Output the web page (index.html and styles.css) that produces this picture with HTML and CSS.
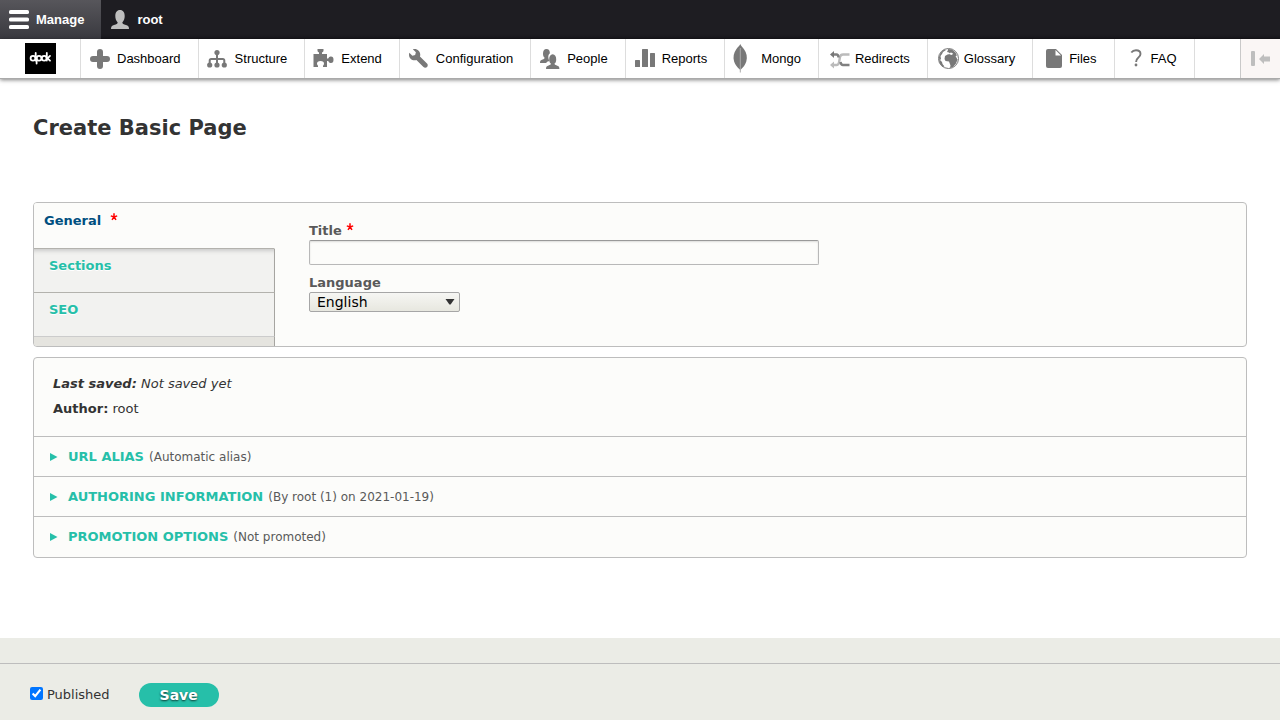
FILE: index.html
```html
<!DOCTYPE html>
<html lang="en">
<head>
<meta charset="utf-8">
<title>Create Basic Page</title>
<meta name="viewport" content="width=device-width, initial-scale=1">
<link rel="stylesheet" href="styles.css">
</head>
<body>
<nav class="bar" aria-label="Administration toolbar">
  <a class="bar-tab is-active" href="#">
    <svg class="bar-icon" viewBox="0 0 20 20" fill="#fff"><rect y="0" width="20" height="4" rx="1.6"/><rect y="7.500" width="20" height="4" rx="1.6"/><rect y="15" width="20" height="4" rx="1.6"/></svg>
    Manage
  </a>
  <a class="bar-tab" href="#">
    <svg class="bar-icon" viewBox="0 0 20 20" fill="#bebebe"><path d="M1 19c0-2.600 1-3.400 3-4 2.500-.7 3.700-1.300 3.700-2.600C6 10.800 5.300 8.500 5.300 6c0-3.500 1.600-6 4.700-6s4.700 2.500 4.700 6c0 2.500-.7 4.800-2.400 6.400 0 1.300 1.200 1.900 3.700 2.600 2 .6 3 1.400 3 4z"/></svg>
    root
  </a>
</nav>
<nav class="tray" aria-label="Administration menu">
  <a class="brand" href="#" aria-label="dpdk">
    <svg class="brand-logo" viewBox="0 0 31 31" fill="none" stroke="#fff" stroke-width="1.800" stroke-linecap="round"><rect width="31" height="31" fill="#000" stroke="none"/><circle cx="8" cy="15.300" r="2.400"/><line x1="10.700" y1="10" x2="10.700" y2="17.500"/><circle cx="14" cy="15.300" r="2.400"/><line x1="11.600" y1="15" x2="11.600" y2="20.500"/><circle cx="19.200" cy="15.300" r="2.400"/><line x1="21.800" y1="10" x2="21.800" y2="17.500"/><line x1="22.500" y1="15.300" x2="25" y2="12.900"/><line x1="22.500" y1="15.300" x2="25" y2="17.700"/></svg>
  </a>
  <ul class="menu">
    <li><a href="#"><svg class="menu-icon" viewBox="0 0 36 39"><path d="M19 13v14M12 20h14" fill="none" stroke="#787878" stroke-width="6" stroke-linecap="round"/></svg>Dashboard</a></li>
    <li><a href="#"><svg class="menu-icon" viewBox="0 0 36 39"><g fill="#787878"><circle cx="18" cy="13.500" r="2.600"/><circle cx="10.700" cy="26" r="2.600"/><circle cx="18" cy="26" r="2.600"/><circle cx="25.300" cy="26" r="2.600"/></g><path d="M18 14v12M10.700 26v-4.500q0-1.500 1.500-1.500h11.600q1.500 0 1.500 1.500v4.500" fill="none" stroke="#787878" stroke-width="2"/></svg>Structure</a></li>
    <li><a href="#"><svg class="menu-icon" viewBox="0 0 36 39" fill="#787878"><path d="M8.500 15h5.500v-1.500q-1.500-.5-1.500-1.700V10h6v1.800q0 1.200-1.500 1.700V15h5v4.500h1.200q.8-2 2.300-2h.5q2.500 0 2.500 3.200t-2.500 3.200h-.5q-1.500 0-2.300-2H22V28h-4v-1.200q1-1 1-2.100 0-2.700-3.500-2.700T12 24.700q0 1.100 1 2.100V28H8.500z"/></svg>Extend</a></li>
    <li><a href="#"><svg class="menu-icon" viewBox="0 0 36 39" fill="#787878"><path transform="translate(9 10) scale(1.250)" d="M14.416 11.586l-.01-.009-5.656-5.656c.15-.449.252-.921.252-1.421 0-2.485-2.016-4.500-4.502-4.500-.505 0-.981.102-1.434.255l2.431 2.431-.588 2.196-2.196.588-2.445-2.445c-.162.464-.268.956-.268 1.475 0 2.486 2.014 4.500 4.500 4.500.5 0 .972-.102 1.421-.251l5.667 5.665c.781.781 2.047.781 2.828 0s.781-2.047 0-2.828z"/></svg>Configuration</a></li>
    <li><a href="#"><svg class="menu-icon" viewBox="0 0 36 39" fill="#787878"><path d="M9 24c0-2.200.8-3 2.600-3.500 1.300-.4 2-.8 2-1.700-1-.9-1.600-2.300-1.600-4.100 0-2.900 1.200-4.700 3.400-4.700 2.400 0 3.500 1.500 3.500 4.300-1.500 1.300-2 3-1.300 5.600.3.900.6 1.500 1 1.900-1.300.6-2.600.8-3.400 2.200z"/><path d="M15 30c0-2.200.8-3 2.600-3.500 1.500-.4 2.300-.9 2.300-1.900-1.200-.9-1.700-2.400-1.700-4.200 0-3 1.300-5.100 3.500-5.100s3.500 2.100 3.500 5.100c0 1.800-.5 3.300-1.700 4.200 0 1 .8 1.500 2.300 1.900 1.800.5 2.600 1.300 2.600 3.500z"/></svg>People</a></li>
    <li><a href="#"><svg class="menu-icon" viewBox="0 0 36 39" fill="#787878"><rect x="9" y="21" width="5" height="7" rx=".5"/><rect x="16" y="10" width="6" height="18" rx=".5"/><rect x="24" y="14" width="5" height="14" rx=".5"/></svg>Reports</a></li>
    <li><a href="#"><svg class="menu-icon" viewBox="0 0 36 39"><path d="M15.300 5c.5 1.800 2.200 3.200 3.700 5.200 2.600 3.500 3.600 8 2.300 12.200-1 3.300-3 5.900-5.500 8h-1c-2.700-2.300-4.700-4.700-5.700-7.900-1.300-4.300-.3-8.900 2.200-12.300C12.500 8.200 14.800 7 15.300 5z" fill="#787878"/><path d="M15.300 9v24.500" stroke="#aaa" stroke-width="1" fill="none"/></svg>Mongo</a></li>
    <li><a href="#"><svg class="menu-icon" viewBox="0 0 36 39" fill="none" stroke-width="2.400"><path d="M14 26h3.500q2 0 2.500-2.500l1-5.500q.5-2.500 3-2.500h6.500" stroke="#bbb"/><path d="M11 26l4-3.500v7z" fill="#bbb"/><path d="M14 15.500h3.500q1.800 0 2 3M21.500 23q.5 3 2.500 3h6.500" stroke="#808080"/><path d="M11 15.500l4-3.500v7z" fill="#787878"/></svg>Redirects</a></li>
    <li><a href="#"><svg class="menu-icon" viewBox="0 0 36 39"><circle cx="20.500" cy="19.500" r="10" fill="#fff" stroke="#787878" stroke-width="1"/><g fill="#787878"><path d="M20 10l4 .5 3.500 3 1.500 3-1.500.5 2 3.500-1.500 4-3 3.500-3 1 .5-2.500-1.500-4-3.500-.5-1-2 .5-3 2.500-1.500 2.500-.5-1-1.500-2-.5 1-2z"/><path d="M11 18l1.500-4 3.500-3.500 2 .5-3 2-1 2-1.500 2 .5 3-1 1 2 2 .5 2 2 2.500-2 .5-3-4z"/></g><path d="M21 14.500l2-1 2 1-1 1.500-2-.5z" fill="#fff"/></svg>Glossary</a></li>
    <li><a href="#"><svg class="menu-icon" viewBox="0 0 36 39"><path d="M15 10h8l6 6v11q0 2-2 2H15q-2 0-2-2V12q0-2 2-2z" fill="#787878"/><path d="M22.500 11l5.500 5.500h-5.500z" fill="#fff"/></svg>Files</a></li>
    <li><a href="#"><svg class="menu-icon" viewBox="0 0 36 39"><path d="M16.300 13.500Q18 11.300 21 11.300q4.500 0 4.500 3.700 0 2-2.500 4-1.900 1.500-1.900 4" fill="none" stroke="#787878" stroke-width="1.900"/><circle cx="21" cy="26" r="1.400" fill="#787878"/></svg>FAQ</a></li>
  </ul>
  <button class="orient" type="button" aria-label="Vertical orientation"><svg class="orient-icon" viewBox="0 0 20 16" fill="#bebebe"><rect width="4" height="15" rx="1"/><path d="M8 8l5-5v2.500h6v5h-6V13z"/></svg></button>
</nav>
<form class="page">
  <main class="content">
    <h1 class="title">Create Basic Page</h1>
    <section class="panel tabs">
      <ul class="tab-list">
        <li class="tab is-selected"><a href="#">General <svg class="required" viewBox="0 0 8 8" aria-label="required"><path d="M4 .3V4L.8 2.900M4 4l3.200-1.100M4 4L2 6.900M4 4l2 2.900" fill="none" stroke="#f00" stroke-width="1.500"/></svg></a></li>
        <li class="tab"><a href="#">Sections</a></li>
        <li class="tab"><a href="#">SEO</a></li>
      </ul>
      <div class="fields">
        <div class="field">
          <label for="title">Title <svg class="required" viewBox="0 0 8 8" aria-hidden="true"><path d="M4 .3V4L.8 2.900M4 4l3.200-1.100M4 4L2 6.900M4 4l2 2.900" fill="none" stroke="#f00" stroke-width="1.500"/></svg></label>
          <input class="text-input" id="title" type="text" required>
        </div>
        <div class="field">
          <label for="language">Language</label>
          <span class="select-wrap">
            <select class="select" id="language"><option>English</option></select>
            <svg class="select-arrow" viewBox="0 0 10 6" aria-hidden="true"><path d="M.5 0h9L5.600 5.500H4.400z" fill="#333"/></svg>
          </span>
        </div>
      </div>
    </section>
    <section class="panel">
      <div class="meta">
        <p><em><strong>Last saved:</strong> Not saved yet</em></p>
        <p><strong>Author:</strong> root</p>
      </div>
      <details class="option"><summary><svg class="marker" viewBox="0 0 8 8"><path d="M0 0l7.500 4L0 8z"/></svg><span class="option-name">URL alias</span><span class="option-note">(Automatic alias)</span></summary></details>
      <details class="option"><summary><svg class="marker" viewBox="0 0 8 8"><path d="M0 0l7.500 4L0 8z"/></svg><span class="option-name">Authoring information</span><span class="option-note">(By root (1) on 2021-01-19)</span></summary></details>
      <details class="option"><summary><svg class="marker" viewBox="0 0 8 8"><path d="M0 0l7.500 4L0 8z"/></svg><span class="option-name">Promotion options</span><span class="option-note">(Not promoted)</span></summary></details>
    </section>
  </main>
  <footer class="footer">
    <div class="actions">
      <input class="check" id="published" type="checkbox" checked>
      <label class="check-label" for="published">Published</label>
      <button class="save" type="submit">Save</button>
    </div>
  </footer>
</form>
</body>
</html>
```
FILE: styles.css
```css
* { box-sizing: border-box; }

body {
  display: flex;
  flex-direction: column;
  min-height: 100vh;
  margin: 0;
  background: #fff;
  color: #333;
  font: 13px/20px "DejaVu Sans", sans-serif;
}

a { text-decoration: none; }
ul { list-style: none; margin: 0; padding: 0; }

.bar {
  display: flex;
  background: linear-gradient(#1e1d22 90%, #16151a);
  font: bold 13px/39px "Liberation Sans", sans-serif;
}
.bar-tab {
  display: flex;
  align-items: center;
  gap: 7px;
  padding: 0 17px 0 9px;
  color: #fff;
}
.bar-tab.is-active { background: linear-gradient(#57565b, #39393f); }
.bar-icon { width: 20px; height: 20px; }

.tray {
  display: flex;
  border-bottom: 1px solid #aaa;
  box-shadow: 0 1px 4px rgba(0, 0, 0, 0.5);
  background: #fff;
  font: 13px/39px "Liberation Sans", sans-serif;
}
.brand {
  display: flex;
  align-items: center;
  justify-content: center;
  width: 81px;
  border-right: 1px solid #ddd;
}
.brand-logo { width: 31px; height: 31px; }
.menu { display: flex; flex: 1; }
.menu li { border-right: 1px solid #ddd; }
.menu a {
  display: flex;
  padding-right: 17px;
  color: #000;
}
.menu-icon { width: 36px; height: 39px; }
.orient {
  display: flex;
  align-items: center;
  justify-content: center;
  width: 40px;
  padding: 0;
  border: 0;
  border-left: 1px solid #c9c9c9;
  background: #faf6f5;
}
.orient-icon { width: 20px; height: 16px; }

.page { display: flex; flex: 1; flex-direction: column; }
.content { padding: 37px 33px 80px; }
.title {
  margin: 0 0 62px;
  font-size: 21px;
  line-height: 24px;
}

.panel {
  margin-bottom: 10px;
  border: 1px solid #bdbdbd;
  border-radius: 4px;
  background: #fcfcfa;
  overflow: hidden;
}
.panel:last-child { margin-bottom: 0; }

.tabs { display: flex; min-height: 145px; }
.tab-list {
  display: flex;
  flex-direction: column;
  width: 241px;
  background: #e5e4df;
}
.tab {
  height: 44px;
  border-right: 1px solid #a6a5a1;
  border-bottom: 1px solid #b3b2ad;
  background: #f2f2f0;
  font-weight: bold;
}
.tab:last-child { border-bottom-color: #ccc; }
.tab a {
  display: block;
  padding: 7px 15px;
  color: #26bfa9;
  text-shadow: 0 1px #fff;
}
.tab.is-selected {
  height: 46px;
  border-right-color: #fcfcfa;
  background: #fcfcfa;
}
.tab.is-selected a { padding: 8px 10px; color: #004f80; }
.tab.is-selected + .tab { box-shadow: inset 0 5px 5px -4px #bbb; }
.tab-list::after {
  content: "";
  flex: 1;
  border-right: 1px solid #a6a5a1;
}
.required {
  width: 8px;
  height: 8px;
  vertical-align: 4px;
}
.tab .required { margin-left: 4px; }

.fields { flex: 1; padding: 19px 34px; }
.field { margin-bottom: 9px; }
.field label {
  display: block;
  color: #595959;
  font-weight: bold;
  line-height: 18px;
}
.text-input {
  display: block;
  width: 510px;
  max-width: 100%;
  height: 25px;
  padding: 3px 7px;
  border: 1px solid #b8b8b8;
  border-top-color: #999;
  border-radius: 2px;
  background: #fcfcfa;
  box-shadow: inset 0 1px 2px rgba(0, 0, 0, 0.13);
  font: 14px "DejaVu Sans", sans-serif;
}
.select-wrap { display: inline-grid; align-items: center; }
.select {
  grid-area: 1 / 1;
  appearance: none;
  width: 151px;
  height: 20px;
  padding: 0 7px;
  border: 1px solid #a6a6a6;
  border-radius: 2px;
  background: linear-gradient(#f6f6f3, #e7e7df);
  color: #000;
  font: 14px/18px "DejaVu Sans", sans-serif;
}
.select-arrow {
  grid-area: 1 / 1;
  justify-self: end;
  width: 10px;
  height: 6px;
  margin-right: 5px;
  pointer-events: none;
}

.meta { padding: 16px 19px 12px; }
.meta p { margin: 0 0 5px; }
.option { border-top: 1px solid #bdbdbd; }
.option summary {
  display: flex;
  align-items: center;
  height: 39px;
  padding-left: 16px;
  cursor: pointer;
}
.option:last-child summary { height: 40px; }
.marker {
  width: 8px;
  height: 8px;
  margin-right: 10px;
  fill: #26bfa9;
}
.option-name {
  margin-right: 5px;
  color: #26bfa9;
  font-weight: bold;
  text-transform: uppercase;
}
.option-note { color: #595959; font-size: 12px; }

.footer {
  flex: 1;
  padding-top: 25px;
  background: #ebece6;
}
.actions {
  display: flex;
  align-items: center;
  padding: 19px 30px 13px;
  border-top: 1px solid #bdbdbd;
}
.check { width: 13px; height: 13px; margin: 0 4px 4px 0; }
.save {
  height: 24px;
  margin-left: 29px;
  padding: 0 21px;
  border: 0;
  border-radius: 12px;
  background: #26bfa9;
  color: #fff;
  font: bold 14px/24px "DejaVu Sans", sans-serif;
  text-shadow: 0 1px 2px rgba(0, 0, 0, 0.7);
}
```
